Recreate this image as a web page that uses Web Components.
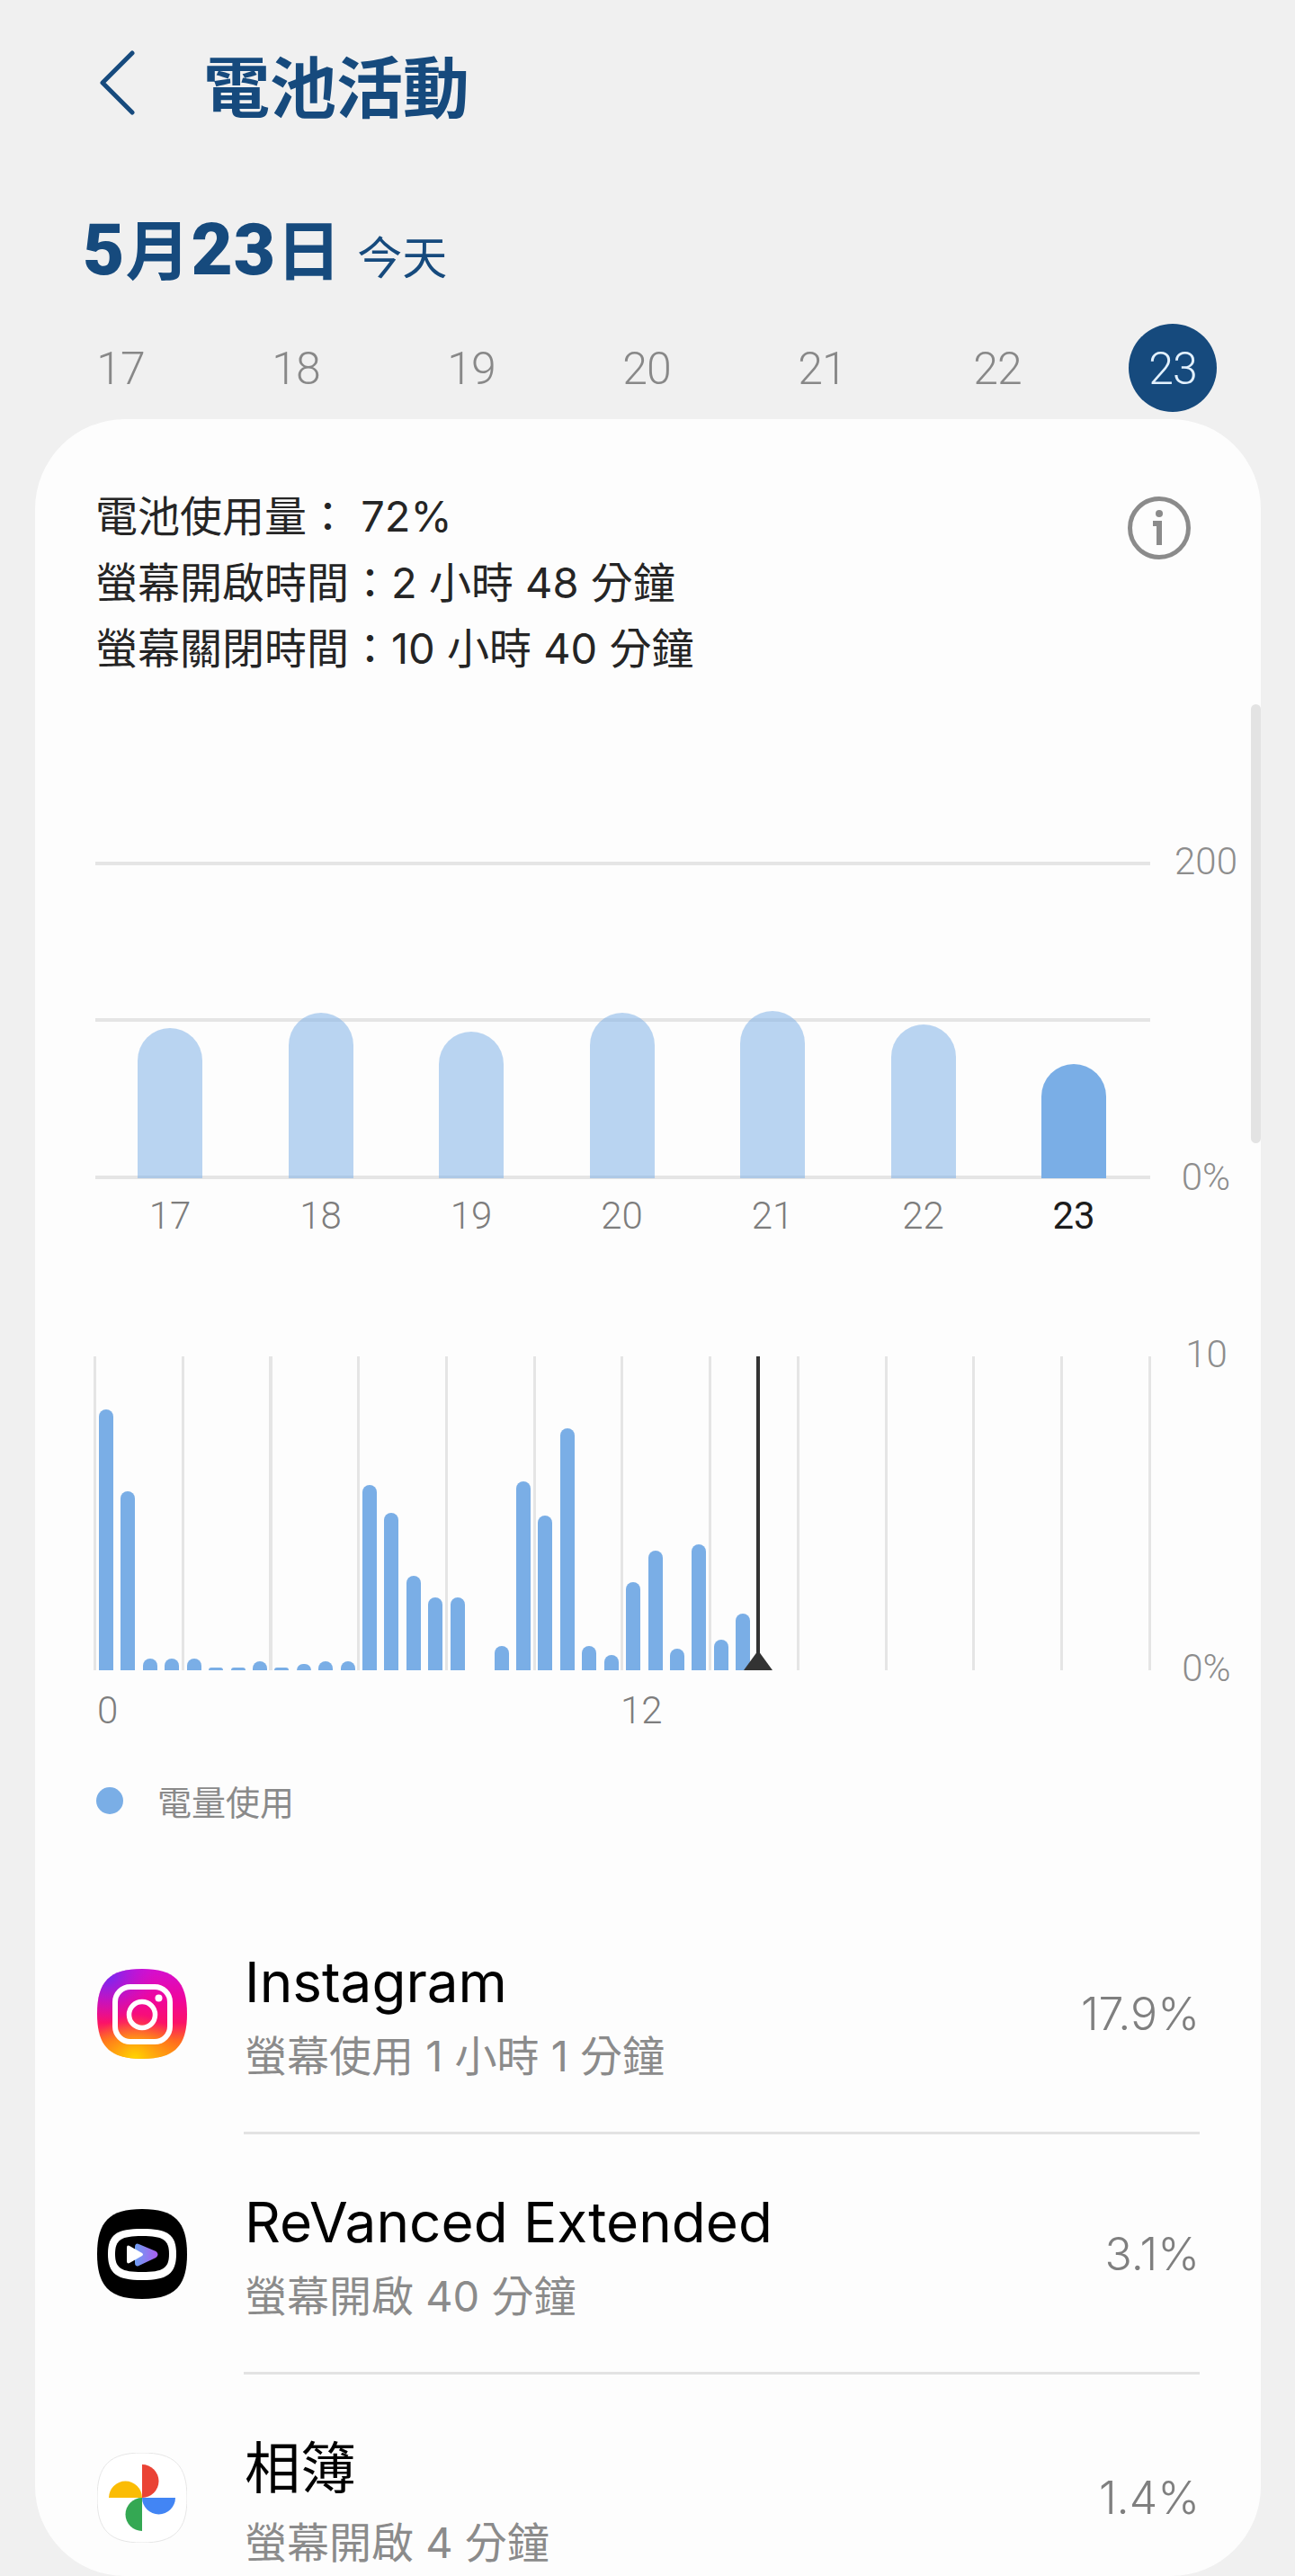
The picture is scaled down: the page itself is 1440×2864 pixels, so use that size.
<!DOCTYPE html>
<html lang="zh-Hant">
<head>
<meta charset="utf-8">
<title>電池活動</title>
<style>
    html, body { margin: 0; padding: 0; background: #f0f0f0; }
    body { font-family: Roboto, "Noto Sans CJK TC", sans-serif; }
</style>
</head>
<body>
<battery-screen>
    <page-header slot="top">電池活動</page-header>
    <date-heading slot="top" date="5月23日" note="今天"></date-heading>
    <date-strip slot="top" days="17,18,19,20,21,22,23" active="23"></date-strip>
    <usage-card>
        <usage-summary>
            <div>電池使用量： 72%</div>
            <div>螢幕開啟時間：2 小時 48 分鐘</div>
            <div>螢幕關閉時間：10 小時 40 分鐘</div>
        </usage-summary>
        <week-chart></week-chart>
        <hour-chart></hour-chart>
        <chart-legend>電量使用</chart-legend>
        <app-row name="Instagram" detail="螢幕使用 1 小時 1 分鐘" value="17.9%">
            <instagram-icon slot="icon"></instagram-icon>
        </app-row>
        <app-row name="ReVanced Extended" detail="螢幕開啟 40 分鐘" value="3.1%">
            <revanced-icon slot="icon"></revanced-icon>
        </app-row>
        <app-row name="相簿" detail="螢幕開啟 4 分鐘" value="1.4%">
            <photos-icon slot="icon"></photos-icon>
        </app-row>
    </usage-card>
</battery-screen>

<script>
// 整個畫面
class BatteryScreen extends HTMLElement {
    constructor() {
        super()
        this.attachShadow({ mode: 'open' })
        this.shadowRoot.innerHTML = `
            <style>
                :host {
                    display: block;
                    box-sizing: border-box;
                    width: 1440px;
                    height: 2864px;
                    overflow: hidden;
                    background: #f0f0f0;
                }
            </style>
            <slot name="top"></slot>
            <slot></slot>
        `
    }
}
// 標題列
class PageHeader extends HTMLElement {
    constructor() {
        super()
        this.attachShadow({ mode: 'open' })
        this.shadowRoot.innerHTML = `
            <style>
                :host {
                    display: flex;
                    align-items: center;
                    box-sizing: border-box;
                    height: 196px;
                    padding: 0 0 12px 110px;
                    color: #164a7d;
                    font-size: 74px;
                    font-weight: 700;
                }
                svg { flex: none; margin-right: 76px; }
            </style>
            <svg width="40" height="72" viewBox="0 0 40 72" fill="none" stroke="#164a7d" stroke-width="5" stroke-linecap="round" stroke-linejoin="round">
                <path d="M37 3 L4 36 L37 69"/>
            </svg>
            <slot></slot>
        `
    }
}
// 日期
class DateHeading extends HTMLElement {
    constructor() {
        super()
        this.attachShadow({ mode: 'open' })
        // 數字比中文大一點，所以包一層
        const date = this.getAttribute('date').replace(/\d+/g, '<b>$&</b>')
        this.shadowRoot.innerHTML = `
            <style>
                :host {
                    display: flex;
                    align-items: baseline;
                    gap: 17px;
                    margin-top: 33px;
                    padding-left: 92px;
                    height: 98px;
                    line-height: 98px;
                    color: #164a7d;
                }
                .date { font-size: 72px; font-weight: 700; letter-spacing: 1px; }
                .date b { font-size: 80px; }
                .note { font-size: 50px; font-weight: 400; }
            </style>
            <span class="date">${date}</span>
            <span class="note">${this.getAttribute('note')}</span>
        `
    }
}
// 日期選擇列
class DateStrip extends HTMLElement {
    constructor() {
        super()
        this.attachShadow({ mode: 'open' })
        const active = this.getAttribute('active')
        const cells = this.getAttribute('days').split(',').map(d =>
            `<span class="day${d === active ? ' on' : ''}">${d}</span>`).join('')
        this.shadowRoot.innerHTML = `
            <style>
                :host {
                    display: grid;
                    grid-template-columns: repeat(7, 98px);
                    column-gap: 97px;
                    margin-top: 33px;
                    padding-left: 85px;
                }
                .day {
                    height: 98px;
                    line-height: 100px;
                    border-radius: 50%;
                    text-align: center;
                    font-size: 50px;
                    font-weight: 300;
                    letter-spacing: -1px;
                    color: #888;
                }
                .on { background: #164a7d; color: #e3f1ff; }
            </style>
            ${cells}
        `
    }
}
// 白色卡片
class UsageCard extends HTMLElement {
    constructor() {
        super()
        this.attachShadow({ mode: 'open' })
        this.shadowRoot.innerHTML = `
            <style>
                :host {
                    display: block;
                    position: relative;
                    box-sizing: border-box;
                    margin: 8px 38px 0 39px;
                    height: 2398px;
                    padding-left: 67px;
                    overflow: hidden;
                    border-radius: 100px;
                    background: #fdfdfd;
                }
                .thumb {
                    position: absolute;
                    top: 317px;
                    right: 0;
                    width: 11px;
                    height: 488px;
                    border-radius: 6px;
                    background: #e3e3e3;
                }
            </style>
            <slot></slot>
            <div class="thumb"></div>
        `
    }
}
// 使用量文字
class UsageSummary extends HTMLElement {
    constructor() {
        super()
        this.attachShadow({ mode: 'open' })
        this.shadowRoot.innerHTML = `
            <style>
                :host {
                    display: flex;
                    justify-content: space-between;
                    align-items: flex-start;
                    padding: 71px 78px 0 0;
                    font-family: Inter, "Noto Sans CJK TC", sans-serif;
                    font-size: 47px;
                    line-height: 73.5px;
                    color: #252525;
                }
                svg { margin-top: 15px; }
            </style>
            <div><slot></slot></div>
            <svg width="70" height="70" viewBox="0 0 70 70" fill="none" stroke="#8b8b8b">
                <circle cx="35" cy="35" r="32.5" stroke-width="5"/>
                <circle cx="35" cy="19" r="4" fill="#8b8b8b" stroke="none"/>
                <path d="M28 30 H35 V54" stroke-width="6"/>
            </svg>
        `
    }
}
// 每週長條圖
class WeekChart extends HTMLElement {
    constructor() {
        super()
        this.attachShadow({ mode: 'open' })
        const days = [
            ['17', 167], ['18', 184], ['19', 163], ['20', 184],
            ['21', 186], ['22', 171], ['23', 127],
        ]
        const bars = days.map(([d, h], i) =>
            `<i class="${i === 6 ? 'now' : ''}" style="height:${h}px"></i>`).join('')
        const labels = days.map(([d], i) =>
            `<span class="${i === 6 ? 'now' : ''}">${d}</span>`).join('')
        this.shadowRoot.innerHTML = `
            <style>
                :host {
                    display: grid;
                    grid-template-columns: 1173px 124px;
                    margin-top: 200px;
                }
                .plot {
                    box-sizing: border-box;
                    height: 353px;
                    padding: 0 0 1px 47px;
                    display: grid;
                    grid-template-columns: repeat(7, 72px);
                    column-gap: 95.5px;
                    align-items: end;
                    background:
                        linear-gradient(#e5e5e5, #e5e5e5) 0 0 / 100% 4px no-repeat,
                        linear-gradient(#e5e5e5, #e5e5e5) 0 174px / 100% 4px no-repeat,
                        linear-gradient(#e5e5e5, #e5e5e5) 0 349px / 100% 4px no-repeat;
                }
                i {
                    display: block;
                    border-radius: 36px 36px 0 0;
                    background: rgba(122, 174, 230, .52);
                }
                i.now { background: #7aaee6; }
                .axis {
                    display: flex;
                    flex-direction: column;
                    justify-content: space-between;
                    margin: -24px 0 -22px;
                    text-align: center;
                    font-size: 42px;
                    line-height: 48px;
                    font-weight: 300;
                    color: #8d8d8d;
                }
                .days {
                    display: grid;
                    grid-template-columns: repeat(7, 72px);
                    column-gap: 95.5px;
                    padding-left: 47px;
                    margin-top: 16px;
                    height: 50px;
                    line-height: 50px;
                    font-size: 42px;
                    font-weight: 300;
                    text-align: center;
                    color: #7d7d7d;
                }
                .days .now { color: #1c1c1c; font-weight: 400; }
            </style>
            <div class="plot">${bars}</div>
            <div class="axis"><span>200</span><span>0%</span></div>
            <div class="days">${labels}</div>
        `
    }
}
// 每小時長條圖
class HourChart extends HTMLElement {
    constructor() {
        super()
        this.attachShadow({ mode: 'open' })
        const heights = [290, 199, 13, 13, 13, 3, 3, 10, 3, 7, 10, 10, 206, 175, 105, 81, 81, 0, 27, 210, 172, 269, 27, 17, 98, 133, 24, 140, 34, 63]
        const bars = heights.map(h => `<i style="height:${h}px"></i>`).join('')
        this.shadowRoot.innerHTML = `
            <style>
                :host {
                    display: grid;
                    grid-template-columns: 1174px 123px;
                    margin-top: 131px;
                }
                .plot {
                    position: relative;
                    box-sizing: border-box;
                    width: 1176px;
                    margin-left: -2px;
                    height: 349px;
                    padding-left: 6px;
                    display: grid;
                    grid-template-columns: repeat(30, 16px);
                    column-gap: 8.43px;
                    align-items: end;
                    background: repeating-linear-gradient(90deg, #e5e5e5 0 3px, transparent 3px 97.75px);
                }
                i {
                    display: block;
                    border-radius: 8px 8px 0 0;
                    background: #7aaee6;
                }
                .cursor {
                    position: absolute;
                    left: 737px;
                    top: 0;
                    bottom: 0;
                    width: 4px;
                    background: #333;
                }
                .cursor::after {
                    content: '';
                    position: absolute;
                    left: -14px;
                    bottom: 0;
                    border-left: 16px solid transparent;
                    border-right: 16px solid transparent;
                    border-bottom: 22px solid #333;
                }
                .axis {
                    display: flex;
                    flex-direction: column;
                    justify-content: space-between;
                    margin: -26px 0 -22px;
                    text-align: center;
                    font-size: 42px;
                    line-height: 48px;
                    font-weight: 300;
                    color: #8d8d8d;
                }
                .hours {
                    display: grid;
                    grid-template-columns: repeat(2, 582px);
                    margin-top: 20px;
                    padding-left: 2px;
                    height: 50px;
                    line-height: 50px;
                    font-size: 42px;
                    font-weight: 300;
                    color: #7d7d7d;
                }
            </style>
            <div class="plot">${bars}<div class="cursor"></div></div>
            <div class="axis"><span>10</span><span>0%</span></div>
            <div class="hours"><span>0</span><span>12</span></div>
        `
    }
}
// 圖例
class ChartLegend extends HTMLElement {
    constructor() {
        super()
        this.attachShadow({ mode: 'open' })
        this.shadowRoot.innerHTML = `
            <style>
                :host {
                    display: flex;
                    align-items: center;
                    gap: 38px;
                    margin-top: 50px;
                    padding-left: 1px;
                    height: 50px;
                    font-size: 38px;
                    color: #8a8a8a;
                }
                .dot { width: 30px; height: 30px; border-radius: 50%; background: #7aaee6; }
            </style>
            <span class="dot"></span>
            <slot></slot>
        `
    }
}
// 應用程式列
class AppRow extends HTMLElement {
    constructor() {
        super()
        this.attachShadow({ mode: 'open' })
        this.shadowRoot.innerHTML = `
            <style>
                :host {
                    display: grid;
                    position: relative;
                    grid-template-columns: 100px 1fr auto;
                    column-gap: 64px;
                    align-items: center;
                    box-sizing: border-box;
                    height: 267px;
                    padding: 0 68px 0 2px;
                    font-family: Inter, "Noto Sans CJK TC", sans-serif;
                }
                :host(:first-of-type) { margin-top: 79px; }
                :host(:last-of-type) { padding-top: 8px; }
                :host(:last-of-type) .text { padding-top: 6px; }
                .icon { display: block; width: 100px; height: 100px; }
                .name { font-size: 62px; line-height: 84px; color: #000; }
                .detail { font-size: 47px; line-height: 60px; margin-top: 10px; color: #8b8b8b; }
                .value { font-size: 50px; font-weight: 300; color: #7f7f7f; }
                .rule { position: absolute; left: 165px; right: 68px; bottom: 0; height: 3px; background: #e3e3e3; }
            </style>
            <div class="icon"><slot name="icon"></slot></div>
            <div class="text">
                <div class="name">${this.getAttribute('name')}</div>
                <div class="detail">${this.getAttribute('detail')}</div>
            </div>
            <div class="value">${this.getAttribute('value')}</div>
            <div class="rule"></div>
        `
    }
}
const SQUIRCLE = 'M50 0C86 0 100 14 100 50C100 86 86 100 50 100C14 100 0 86 0 50C0 14 14 0 50 0Z'
class InstagramIcon extends HTMLElement {
    constructor() {
        super()
        this.attachShadow({ mode: 'open' })
        this.shadowRoot.innerHTML = `
            <style>:host { display: block; } svg { display: block; }</style>
            <svg width="100" height="100" viewBox="0 0 100 100">
                <defs>
                    <linearGradient id="base" x1="0" y1="0" x2="0" y2="1">
                        <stop offset="0" stop-color="#d40fd0"/>
                        <stop offset=".35" stop-color="#f0069a"/>
                        <stop offset=".6" stop-color="#fb1268"/>
                        <stop offset=".8" stop-color="#ff6a20"/>
                        <stop offset="1" stop-color="#ff9a10"/>
                    </linearGradient>
                    <radialGradient id="purple" cx=".1" cy=".05" r=".55">
                        <stop offset="0" stop-color="#6a2cf5"/>
                        <stop offset="1" stop-color="#b018e0" stop-opacity="0"/>
                    </radialGradient>
                    <radialGradient id="yellow" cx=".42" cy="1" r=".5">
                        <stop offset="0" stop-color="#ffd600"/>
                        <stop offset="1" stop-color="#ff9a10" stop-opacity="0"/>
                    </radialGradient>
                </defs>
                <path d="${SQUIRCLE}" fill="url(#base)"/>
                <path d="${SQUIRCLE}" fill="url(#purple)"/>
                <path d="${SQUIRCLE}" fill="url(#yellow)"/>
                <rect x="20" y="20" width="61" height="61" rx="17" fill="none" stroke="#fff" stroke-width="6"/>
                <circle cx="50" cy="51" r="14.5" fill="none" stroke="#fff" stroke-width="5.5"/>
                <circle cx="68.5" cy="32.5" r="4" fill="#fff"/>
            </svg>
        `
    }
}
class RevancedIcon extends HTMLElement {
    constructor() {
        super()
        this.attachShadow({ mode: 'open' })
        this.shadowRoot.innerHTML = `
            <style>:host { display: block; } svg { display: block; }</style>
            <svg width="100" height="100" viewBox="0 0 100 100">
                <defs>
                    <linearGradient id="rv" x1="0" y1="0" x2="1" y2="0">
                        <stop offset="0" stop-color="#6f9cf2"/>
                        <stop offset="1" stop-color="#a85ff0"/>
                    </linearGradient>
                </defs>
                <path d="${SQUIRCLE}" fill="#000"/>
                <path d="M50 22C78 22 88 28 88 50C88 72 78 79 50 79C22 79 12 72 12 50C12 28 22 22 50 22Z" fill="#fff"/>
                <path d="M50 30C73 30 80 34 80 50C80 66 73 70 50 70C27 70 20 66 20 50C20 34 27 30 50 30Z" fill="#000"/>
                <path d="M46 40 L65 48 Q68 50.5 65 53 L46 62 Q43 63.5 43 60 V42 Q43 38.5 46 40Z" fill="url(#rv)" stroke="url(#rv)" stroke-width="2" stroke-linejoin="round"/>
                <path d="M36 41 L50 49 Q52 50.5 50 52 L36 60 Q33 61.5 33 58 V43 Q33 39.5 36 41Z" fill="#fff"/>
            </svg>
        `
    }
}
class PhotosIcon extends HTMLElement {
    constructor() {
        super()
        this.attachShadow({ mode: 'open' })
        this.shadowRoot.innerHTML = `
            <style>:host { display: block; } svg { display: block; }</style>
            <svg width="100" height="100" viewBox="0 0 100 100">
                <path d="${SQUIRCLE}" fill="#fff" stroke="#e6e6e6" stroke-width="1"/>
                <path d="M50 13A18.5 18.5 0 0 1 50 50Z" fill="#ea4335"/>
                <path d="M87 50A18.5 18.5 0 0 1 50 50Z" fill="#4285f4"/>
                <path d="M50 87A18.5 18.5 0 0 1 50 50Z" fill="#34a853"/>
                <path d="M13 50A18.5 18.5 0 0 1 50 50Z" fill="#fbbc04"/>
            </svg>
        `
    }
}
customElements.define('battery-screen', BatteryScreen)
customElements.define('page-header', PageHeader)
customElements.define('date-heading', DateHeading)
customElements.define('date-strip', DateStrip)
customElements.define('usage-card', UsageCard)
customElements.define('usage-summary', UsageSummary)
customElements.define('week-chart', WeekChart)
customElements.define('hour-chart', HourChart)
customElements.define('chart-legend', ChartLegend)
customElements.define('app-row', AppRow)
customElements.define('instagram-icon', InstagramIcon)
customElements.define('revanced-icon', RevancedIcon)
customElements.define('photos-icon', PhotosIcon)
</script>
</body>
</html>
